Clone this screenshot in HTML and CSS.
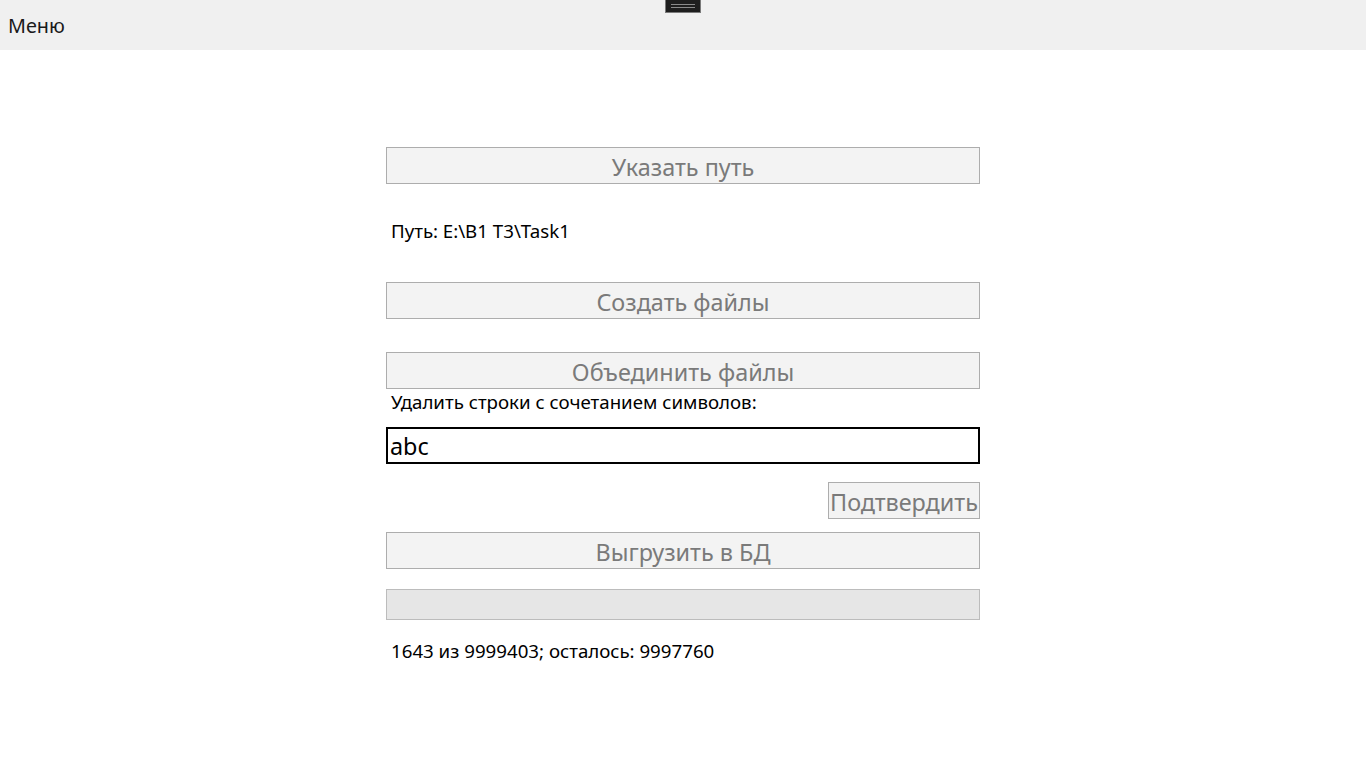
FILE: index.html
```html
<!DOCTYPE html>
<html lang="ru">
<head>
<meta charset="utf-8">
<title>Task1</title>
<link rel="stylesheet" href="styles.css">
</head>
<body>
<header class="menubar">
  <span class="menu-item">Меню</span>
  <div class="handle"><span></span><span></span></div>
</header>
<main class="panel">
  <button class="btn btn-wide">Указать путь</button>
  <div class="label label-path">Путь: E:\B1 T3\Task1</div>
  <button class="btn btn-wide">Создать файлы</button>
  <button class="btn btn-wide gap-33">Объединить файлы</button>
  <div class="label label-delete">Удалить строки с сочетанием символов:</div>
  <input class="text-input" type="text" value="abc">
  <div class="confirm-row"><button class="btn btn-confirm">Подтвердить</button></div>
  <button class="btn btn-wide gap-13">Выгрузить в БД</button>
  <div class="progress"></div>
  <div class="label label-status">1643 из 9999403; осталось: 9997760</div>
</main>
</body>
</html>
```
FILE: styles.css
```css
html, body {
  margin: 0;
  padding: 0;
  background: #ffffff;
  font-family: "Noto Sans", "Open Sans", "DejaVu Sans", sans-serif;
}
.menubar {
  position: relative;
  height: 50px;
  background: #f0f0f0;
  display: flex;
  align-items: center;
}
.menu-item {
  margin-left: 8px;
  margin-top: 1px;
  font-size: 19.8px;
  color: #1a1a1a;
}
.handle {
  position: absolute;
  left: 665px;
  top: 0;
  width: 36px;
  height: 13px;
  box-sizing: border-box;
  background: #1e1e1e;
  border: 1px solid #7a7a7a;
  border-top: none;
  display: flex;
  flex-direction: column;
  align-items: center;
  justify-content: center;
  gap: 2px;
}
.handle span {
  display: block;
  width: 24px;
  height: 1px;
  background: #8a8a8a;
}
.panel {
  display: flex;
  flex-direction: column;
  width: 594px;
  margin-left: 386px;
  padding-top: 97px;
}
.btn {
  box-sizing: border-box;
  height: 37px;
  background: #f3f3f3;
  border: 1px solid #adadad;
  color: #7a7a7a;
  font-family: inherit;
  font-size: 23.4px;
  padding: 3px 0 0 0;
  line-height: 30px;
  border-radius: 0;
  white-space: nowrap;
}
.btn-wide {
  width: 594px;
}
.gap-33 { margin-top: 33px; }
.gap-13 { margin-top: 13px; }
.label {
  height: 24px;
  line-height: 24px;
  font-size: 18.7px;
  color: #000;
  padding-left: 5px;
  white-space: nowrap;
}
.label-path { margin: 35px 0 39px; }
.label-delete { margin: 1px 0 13px; }
.label-status { margin-top: 19px; }
.text-input {
  box-sizing: border-box;
  width: 594px;
  height: 37px;
  border: 2px solid #000;
  padding: 1px 2px 0;
  margin: 0;
  font-family: inherit;
  font-size: 23.4px;
  color: #000;
  outline: none;
}
.confirm-row {
  display: flex;
  justify-content: flex-end;
  margin-top: 18px;
}
.btn-confirm {
  width: 152px;
}
.progress {
  box-sizing: border-box;
  height: 31px;
  margin-top: 20px;
  background: #e6e6e6;
  border: 1px solid #bcbcbc;
}
```
